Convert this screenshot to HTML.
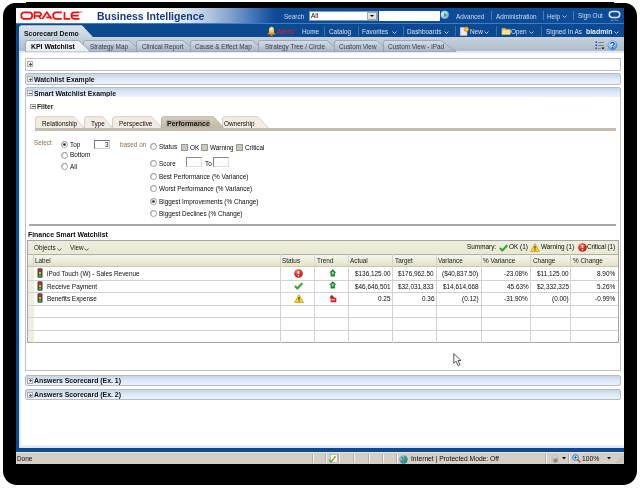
<!DOCTYPE html><html><head><meta charset="utf-8"><style>*{margin:0;padding:0;box-sizing:border-box}
html,body{width:640px;height:488px;overflow:hidden;background:#fff;font-family:"Liberation Sans",sans-serif;font-size:6.4px;color:#000;position:relative}
.a{position:absolute}
.t{position:absolute;line-height:1;white-space:nowrap;will-change:transform}
</style></head><body><div class="a" style="left:3px;top:3px;width:634px;height:482px;background:#000;border-radius:12px 12px 14px 14px / 13px 13px 14px 14px"></div>
<div class="a" style="left:26px;top:2px;width:588px;height:2px;background:#000"></div>
<div class="a" style="left:16px;top:8px;width:608px;height:456px;background:#fff"></div>
<div class="a" style="left:16px;top:8px;width:608px;height:15px;background:linear-gradient(to right,#fff 0px,#fff 144px,#e8eef5 159px,#c4d4e6 184px,#8eacd2 209px,#5a86c0 229px,#2e62aa 246px,#0e4b96 259px,#0e4b96 608px)"></div>
<div class="a" style="left:16px;top:23px;width:608px;height:1px;background:#3f7dcc"></div>
<div class="a" style="left:16px;top:24px;width:608px;height:13px;background:#0b4990"></div>
<div class="a" style="left:16px;top:37px;width:608px;height:15px;background:#0b4a93"></div>
<div class="a" style="left:19px;top:37px;width:605px;height:15px;background:linear-gradient(#c6d2dc,#b9c6d3 50%,#acb9ca)"></div>
<div class="a" style="left:16px;top:51px;width:608px;height:401px;background:#0b4a93"></div>
<div class="a" style="left:19px;top:51px;width:605px;height:395px;background:linear-gradient(to right,#d8e4f6,#eef3fb 2px,#fff 3px)"></div>
<div class="a" style="left:19px;top:51px;width:605px;height:4px;background:#e2eaf6"></div>
<div class="a" style="left:20px;top:53px;width:604px;height:393px;background:linear-gradient(to right,#e4ecf8,#fff 2px);border-radius:2px 0 0 0"></div>
<svg class="a" style="left:16px;top:8px" width="70" height="14" viewBox="0 0 70 14"><g fill="none" stroke="#ff0a0a" stroke-width="1.7" transform="translate(-16,-8)"><rect x="21.3" y="12.3" width="10.9" height="6.65" rx="3.2"/><path d="M34.5 19V12.3H38.6Q41 12.3 41 14.2Q41 16 38.6 16H34.5M38.3 16L41.2 19"/><path d="M42.2 19L46.9 12.3L51.6 19M46.4 17.3H50"/><path d="M61.8 12.3H56.4Q53.1 12.3 53.1 15.6Q53.1 18.95 56.4 18.95H61.8"/><path d="M64.5 12V18.95H70.2"/><path d="M79.5 12.3H74.6Q71.4 12.3 71.4 15.6Q71.4 18.95 74.6 18.95H79.5M72 15.6H78.6"/></g><circle cx="65" cy="4" r="0.7" fill="#f40c0c"/></svg>
<div class="t" style="left:96.6px;top:10.81px;font-size:10.5px;font-weight:bold;color:#173a7c;">Business Intelligence</div>
<div class="t" style="left:284px;top:14.00px;font-size:6.4px;color:#ccdcf0;">Search</div>
<div class="a" style="left:309px;top:11px;width:69px;height:10px;background:#fff;border:1px solid #7b9ebd"></div>
<div class="t" style="left:311px;top:13.00px;font-size:6.4px;color:#000;">All</div>
<div class="a" style="left:367px;top:12px;width:10px;height:8px;background:#e4e2dc;border:1px solid #a8a59c"></div>
<svg class="a" style="left:369px;top:14px" width="6" height="4" viewBox="0 0 6 4"><path d="M1 1h4L3 3z" fill="#000"/></svg>
<div class="a" style="left:378.5px;top:11px;width:61px;height:10px;background:#fff"></div>
<svg class="a" style="left:440px;top:10px" width="10" height="10" viewBox="0 0 10 10"><defs><radialGradient id="gb" cx="0.35" cy="0.4" r="0.75"><stop offset="0" stop-color="#e8f4ff"/><stop offset="0.6" stop-color="#8cc8f8"/><stop offset="1" stop-color="#4a98e0"/></radialGradient></defs><circle cx="4.8" cy="4.8" r="4.1" fill="url(#gb)"/><path d="M3.9 2.4L7.2 4.9L3.9 7.5z" fill="#3ea83a"/></svg>
<div class="t" style="left:456px;top:14.00px;font-size:6.4px;color:#ccdcf0;">Advanced</div>
<div class="a" style="left:491px;top:11px;width:1px;height:9px;background:#4a7cc0"></div>
<div class="t" style="left:496px;top:14.00px;font-size:6.4px;color:#ccdcf0;">Administration</div>
<div class="a" style="left:542.5px;top:11px;width:1px;height:9px;background:#4a7cc0"></div>
<div class="t" style="left:547.4px;top:14.00px;font-size:6.4px;color:#ccdcf0;">Help</div>
<svg class="a" style="left:562px;top:15px" width="5" height="3" viewBox="0 0 5 3"><path d="M0.5 0.5L2.5 2.5L4.5 0.5" stroke="#ccdcf0" fill="none" stroke-width="0.9"/></svg>
<div class="a" style="left:573.3px;top:11px;width:1px;height:9px;background:#4a7cc0"></div>
<div class="t" style="left:578px;top:13.00px;font-size:6.4px;color:#ccdcf0;">Sign Out</div>
<svg class="a" style="left:608px;top:10px" width="13" height="12" viewBox="0 0 13 12"><rect x="1.3" y="1.6" width="10.4" height="6" rx="3" fill="none" stroke="#dfe8f6" stroke-width="1.5"/><path d="M2.5 10.6Q6.5 9.2 10.5 10.6" stroke="#7fa3d3" stroke-width="0.7" fill="none"/></svg>
<svg class="a" style="left:16px;top:24px" width="80" height="14" viewBox="0 0 80 14"><defs><linearGradient id="sd" x1="0" y1="0" x2="0" y2="1"><stop offset="0" stop-color="#dae4ea"/><stop offset="1" stop-color="#c6d2dc"/></linearGradient></defs><path d="M3 14V4Q3 1.3 6 1.3H66L77 13V14z" fill="url(#sd)"/></svg>
<div class="t" style="left:24.4px;top:31.00px;font-size:6.9px;font-weight:bold;color:#111;">Scorecard Demo</div>
<svg class="a" style="left:266px;top:26px" width="11" height="11" viewBox="0 0 11 11"><defs><radialGradient id="bg" cx="0.5" cy="0.3" r="0.7"><stop offset="0" stop-color="#fff6b8"/><stop offset="0.5" stop-color="#f6c040"/><stop offset="1" stop-color="#e08a18"/></radialGradient></defs><path d="M5.5 0.8C3.6 0.8 3 2.4 3 4.3V6.6L1.2 8.6H9.8L8 6.6V4.3C8 2.4 7.4 0.8 5.5 0.8z" fill="url(#bg)"/><ellipse cx="5.5" cy="9.3" rx="1.3" ry="0.8" fill="#e09020"/></svg>
<div class="t" style="left:277px;top:29.00px;font-size:6.4px;color:#e8202e;font-style:italic">Alerts!</div>
<div class="t" style="left:301.6px;top:29.00px;font-size:6.4px;color:#d4e0f2;">Home</div>
<div class="a" style="left:324px;top:26px;width:1px;height:10px;background:#3d6fb0"></div>
<div class="t" style="left:329px;top:29.00px;font-size:6.4px;color:#d4e0f2;">Catalog</div>
<div class="a" style="left:357.5px;top:26px;width:1px;height:10px;background:#3d6fb0"></div>
<div class="t" style="left:362px;top:29.00px;font-size:6.4px;color:#d4e0f2;">Favorites</div>
<svg class="a" style="left:391.5px;top:31px" width="5" height="3" viewBox="0 0 5 3"><path d="M0.5 0.5L2.5 2.5L4.5 0.5" stroke="#d4e0f2" fill="none" stroke-width="0.9"/></svg>
<div class="a" style="left:403px;top:26px;width:1px;height:10px;background:#3d6fb0"></div>
<div class="t" style="left:407px;top:29.00px;font-size:6.4px;color:#d4e0f2;">Dashboards</div>
<svg class="a" style="left:443.5px;top:31px" width="5" height="3" viewBox="0 0 5 3"><path d="M0.5 0.5L2.5 2.5L4.5 0.5" stroke="#d4e0f2" fill="none" stroke-width="0.9"/></svg>
<div class="a" style="left:454.5px;top:26px;width:1px;height:10px;background:#3d6fb0"></div>
<svg class="a" style="left:459px;top:25px" width="11" height="12" viewBox="0 0 11 12"><path d="M1.3 2.5h5.5l1.2 1.2V10.6H1.3z" fill="#eeeaf6" stroke="#c8c0e0" stroke-width="0.5"/><circle cx="7.3" cy="4.3" r="2.3" fill="#f8c02a" stroke="#e0701a" stroke-width="0.6"/></svg>
<div class="t" style="left:470px;top:29.00px;font-size:6.4px;color:#d4e0f2;">New</div>
<svg class="a" style="left:484px;top:31px" width="5" height="3" viewBox="0 0 5 3"><path d="M0.5 0.5L2.5 2.5L4.5 0.5" stroke="#d4e0f2" fill="none" stroke-width="0.9"/></svg>
<div class="a" style="left:496px;top:26px;width:1px;height:10px;background:#3d6fb0"></div>
<svg class="a" style="left:500.5px;top:26px" width="10" height="9" viewBox="0 0 10 9"><path d="M0.8 2.2h3.3l1 1h4.3v5.3h-8.6z" fill="#e6c858" stroke="#b89830" stroke-width="0.4"/><path d="M1.6 4.4h8l-0.8 4.1h-7.9z" fill="#f8e698"/></svg>
<div class="t" style="left:511px;top:29.00px;font-size:6.4px;color:#d4e0f2;">Open</div>
<svg class="a" style="left:529px;top:31px" width="5" height="3" viewBox="0 0 5 3"><path d="M0.5 0.5L2.5 2.5L4.5 0.5" stroke="#d4e0f2" fill="none" stroke-width="0.9"/></svg>
<div class="a" style="left:540.5px;top:26px;width:1px;height:10px;background:#3d6fb0"></div>
<div class="t" style="left:545.5px;top:29.00px;font-size:6.4px;color:#d4e0f2;">Signed In As</div>
<div class="t" style="left:585.5px;top:29.00px;font-size:6.9px;font-weight:bold;color:#e4eef9;">biadmin</div>
<svg class="a" style="left:614px;top:31px" width="5" height="3" viewBox="0 0 5 3"><path d="M0.5 0.5L2.5 2.5L4.5 0.5" stroke="#d4e0f2" fill="none" stroke-width="0.9"/></svg>
<svg class="a" style="left:83px;top:40px" width="55" height="12" viewBox="0 0 55 12"><defs><linearGradient id="tga" x1="0" y1="0" x2="0" y2="1"><stop offset="0" stop-color="#f4f7fa"/><stop offset="1" stop-color="#e6edf5"/></linearGradient><linearGradient id="tgi" x1="0" y1="0" x2="0" y2="1"><stop offset="0" stop-color="#d6dee8"/><stop offset="1" stop-color="#a6b3c5"/></linearGradient></defs><path d="M0.5 12V2.8Q0.5 0.5 2.8 0.5H46L53.5 7V12z" fill="url(#tgi)" stroke="#8e9cae" stroke-width="0.8"/></svg>
<div class="t" style="left:90.3px;top:44.00px;font-size:6.4px;color:#333a44;">Strategy Map</div>
<svg class="a" style="left:136px;top:40px" width="56" height="12" viewBox="0 0 56 12"><defs><linearGradient id="tga" x1="0" y1="0" x2="0" y2="1"><stop offset="0" stop-color="#f4f7fa"/><stop offset="1" stop-color="#e6edf5"/></linearGradient><linearGradient id="tgi" x1="0" y1="0" x2="0" y2="1"><stop offset="0" stop-color="#d6dee8"/><stop offset="1" stop-color="#a6b3c5"/></linearGradient></defs><path d="M0.5 12V2.8Q0.5 0.5 2.8 0.5H47L54.5 7V12z" fill="url(#tgi)" stroke="#8e9cae" stroke-width="0.8"/></svg>
<div class="t" style="left:142px;top:44.00px;font-size:6.4px;color:#333a44;">Clinical Report</div>
<svg class="a" style="left:189.5px;top:40px" width="71.5" height="12" viewBox="0 0 71.5 12"><defs><linearGradient id="tga" x1="0" y1="0" x2="0" y2="1"><stop offset="0" stop-color="#f4f7fa"/><stop offset="1" stop-color="#e6edf5"/></linearGradient><linearGradient id="tgi" x1="0" y1="0" x2="0" y2="1"><stop offset="0" stop-color="#d6dee8"/><stop offset="1" stop-color="#a6b3c5"/></linearGradient></defs><path d="M0.5 12V2.8Q0.5 0.5 2.8 0.5H62.5L70.0 7V12z" fill="url(#tgi)" stroke="#8e9cae" stroke-width="0.8"/></svg>
<div class="t" style="left:195px;top:44.00px;font-size:6.4px;color:#333a44;">Cause &amp; Effect Map</div>
<svg class="a" style="left:258px;top:40px" width="78" height="12" viewBox="0 0 78 12"><defs><linearGradient id="tga" x1="0" y1="0" x2="0" y2="1"><stop offset="0" stop-color="#f4f7fa"/><stop offset="1" stop-color="#e6edf5"/></linearGradient><linearGradient id="tgi" x1="0" y1="0" x2="0" y2="1"><stop offset="0" stop-color="#d6dee8"/><stop offset="1" stop-color="#a6b3c5"/></linearGradient></defs><path d="M0.5 12V2.8Q0.5 0.5 2.8 0.5H69L76.5 7V12z" fill="url(#tgi)" stroke="#8e9cae" stroke-width="0.8"/></svg>
<div class="t" style="left:264.5px;top:44.00px;font-size:6.4px;color:#333a44;">Strategy Tree / Circle</div>
<svg class="a" style="left:333.5px;top:40px" width="51.5" height="12" viewBox="0 0 51.5 12"><defs><linearGradient id="tga" x1="0" y1="0" x2="0" y2="1"><stop offset="0" stop-color="#f4f7fa"/><stop offset="1" stop-color="#e6edf5"/></linearGradient><linearGradient id="tgi" x1="0" y1="0" x2="0" y2="1"><stop offset="0" stop-color="#d6dee8"/><stop offset="1" stop-color="#a6b3c5"/></linearGradient></defs><path d="M0.5 12V2.8Q0.5 0.5 2.8 0.5H42.5L50.0 7V12z" fill="url(#tgi)" stroke="#8e9cae" stroke-width="0.8"/></svg>
<div class="t" style="left:338.7px;top:44.00px;font-size:6.4px;color:#333a44;">Custom View</div>
<svg class="a" style="left:382.5px;top:40px" width="74.5" height="12" viewBox="0 0 74.5 12"><defs><linearGradient id="tga" x1="0" y1="0" x2="0" y2="1"><stop offset="0" stop-color="#f4f7fa"/><stop offset="1" stop-color="#e6edf5"/></linearGradient><linearGradient id="tgi" x1="0" y1="0" x2="0" y2="1"><stop offset="0" stop-color="#d6dee8"/><stop offset="1" stop-color="#a6b3c5"/></linearGradient></defs><path d="M0.5 12V2.8Q0.5 0.5 2.8 0.5H57.5L73.0 11.5V12z" fill="url(#tgi)" stroke="#8e9cae" stroke-width="0.8"/></svg>
<div class="t" style="left:388px;top:44.00px;font-size:6.4px;color:#333a44;">Custom View - iPad</div>
<svg class="a" style="left:25px;top:40px" width="65.5" height="12" viewBox="0 0 65.5 12"><defs><linearGradient id="tga" x1="0" y1="0" x2="0" y2="1"><stop offset="0" stop-color="#f4f7fa"/><stop offset="1" stop-color="#e6edf5"/></linearGradient><linearGradient id="tgi" x1="0" y1="0" x2="0" y2="1"><stop offset="0" stop-color="#d6dee8"/><stop offset="1" stop-color="#a6b3c5"/></linearGradient></defs><path d="M0.5 12V2.8Q0.5 0.5 2.8 0.5H53.5L64.0 10V12z" fill="url(#tga)" stroke="#8e9cae" stroke-width="0.8"/></svg>
<div class="t" style="left:30.8px;top:44.00px;font-size:6.9px;font-weight:bold;color:#000;">KPI Watchlist</div>
<svg class="a" style="left:595px;top:41px" width="10" height="9" viewBox="0 0 10 9"><g fill="#3a3f8a"><rect x="0.5" y="0.5" width="1.5" height="1.5"/><rect x="0.5" y="3.5" width="1.5" height="1.5"/><rect x="0.5" y="6.5" width="1.5" height="1.5"/></g><g fill="#777"><rect x="3" y="1" width="6" height="0.8"/><rect x="3" y="4" width="6" height="0.8"/><rect x="3" y="7" width="3" height="0.8"/></g><path d="M6.5 6.5h3l-1.5 2z" fill="#000"/></svg>
<svg class="a" style="left:606.5px;top:40px" width="11" height="11" viewBox="0 0 11 11"><defs><radialGradient id="hg" cx="0.4" cy="0.3" r="0.8"><stop offset="0" stop-color="#e6f4ff"/><stop offset="0.55" stop-color="#7ab8ee"/><stop offset="1" stop-color="#2f74c4"/></radialGradient></defs><circle cx="5.5" cy="5.3" r="4.6" fill="url(#hg)" stroke="#4a86cc" stroke-width="0.5"/><path d="M3.9 4Q3.9 2.3 5.6 2.3Q7.3 2.3 7.3 3.8Q7.3 4.8 6.2 5.3Q5.6 5.6 5.6 6.4" fill="none" stroke="#fff" stroke-width="2.1"/><path d="M3.9 4Q3.9 2.3 5.6 2.3Q7.3 2.3 7.3 3.8Q7.3 4.8 6.2 5.3Q5.6 5.6 5.6 6.4" fill="none" stroke="#1a3f9a" stroke-width="1.2"/><circle cx="5.6" cy="8" r="0.8" fill="#1a3f9a"/></svg>
<div class="a" style="left:25px;top:58px;width:596px;height:13px;border:1px solid #c0c0bc;background:#fff"></div>
<div class="a" style="left:27px;top:61px;width:6px;height:6px;background:#e8e8e2;border:1px solid #b4b4aa"></div>
<div class="a" style="left:28.5px;top:63.5px;width:3px;height:1px;background:#555"></div>
<div class="a" style="left:29.5px;top:62.5px;width:1px;height:3px;background:#555"></div>
<div class="a" style="left:25px;top:73px;width:596px;height:12px;background:linear-gradient(#c6d4e6,#dce7f5 45%,#eaf1fb);border:1px solid #b4bcc6;border-radius:2px"></div>
<div class="a" style="left:27px;top:76px;width:6px;height:6px;background:#ecece6;border:1px solid #aeaea4"></div>
<div class="a" style="left:28.5px;top:78.5px;width:3px;height:1px;background:#666"></div>
<div class="a" style="left:29.5px;top:77.5px;width:1px;height:3px;background:#666"></div>
<div class="t" style="left:34px;top:77.00px;font-size:6.9px;font-weight:bold;color:#111;">Watchlist Example</div>
<div class="a" style="left:25px;top:87px;width:596px;height:11px;background:linear-gradient(#c6d4e6,#dce7f5 45%,#eaf1fb);border:1px solid #b4bcc6;border-radius:2px"></div>
<div class="a" style="left:27px;top:90px;width:6px;height:6px;background:#ecece6;border:1px solid #aeaea4"></div>
<div class="a" style="left:28.5px;top:92.5px;width:3px;height:1px;background:#666"></div>
<div class="t" style="left:34px;top:91.00px;font-size:6.9px;font-weight:bold;color:#111;">Smart Watchlist Example</div>
<div class="a" style="left:25px;top:97px;width:596px;height:274px;border:1px solid #c0c0bc;border-top:none;background:#fff"></div>
<div class="a" style="left:30.3px;top:103.5px;width:5.5px;height:5.5px;background:#eeeeea;border:1px solid #a0a098"></div>
<div class="a" style="left:31.5px;top:105.7px;width:3px;height:1px;background:#555"></div>
<div class="t" style="left:37.3px;top:104.00px;font-size:6.7px;font-weight:bold;color:#1a1a1a;">Filter</div>
<svg class="a" style="left:35px;top:116px" width="50" height="13" viewBox="0 0 50 13"><path d="M0.5 13V3Q0.5 0.7 2.5 0.7H39L48.5 11V13z" fill="#f3ece4" stroke="#c9bfb0" stroke-width="0.7"/></svg>
<svg class="a" style="left:83.5px;top:116px" width="29.5" height="13" viewBox="0 0 29.5 13"><path d="M0.5 13V3Q0.5 0.7 2.5 0.7H18.5L28.0 11V13z" fill="#f3ece4" stroke="#c9bfb0" stroke-width="0.7"/></svg>
<svg class="a" style="left:111.5px;top:116px" width="50.5" height="13" viewBox="0 0 50.5 13"><path d="M0.5 13V3Q0.5 0.7 2.5 0.7H39.5L49.0 11V13z" fill="#f3ece4" stroke="#c9bfb0" stroke-width="0.7"/></svg>
<svg class="a" style="left:222px;top:116px" width="47" height="13" viewBox="0 0 47 13"><path d="M0.5 13V3Q0.5 0.7 2.5 0.7H36L45.5 11V13z" fill="#f3ece4" stroke="#c9bfb0" stroke-width="0.7"/></svg>
<svg class="a" style="left:160.5px;top:116px" width="63.5" height="13" viewBox="0 0 63.5 13"><defs><linearGradient id="fta" x1="0" y1="0" x2="0" y2="1"><stop offset="0" stop-color="#d8d0c0"/><stop offset="1" stop-color="#bfb59f"/></linearGradient></defs><path d="M0.5 13V3Q0.5 0.7 2.5 0.7H52.5L62.0 11V13z" fill="url(#fta)" stroke="#a89e8a" stroke-width="0.7"/></svg>
<div class="a" style="left:35px;top:128px;width:581px;height:2.5px;background:#c5bcad"></div>
<div class="t" style="left:41.6px;top:121.00px;font-size:6.4px;color:#0a0a0a;">Relationship</div>
<div class="t" style="left:91px;top:121.00px;font-size:6.4px;color:#0a0a0a;">Type</div>
<div class="t" style="left:119px;top:121.00px;font-size:6.4px;color:#0a0a0a;">Perspective</div>
<div class="a" style="left:166px;top:119.5px;width:44px;height:7.5px;background:#b6ae9c"></div>
<div class="t" style="left:167px;top:120.00px;font-size:7px;font-weight:bold;color:#111;">Performance</div>
<div class="t" style="left:223.7px;top:121.00px;font-size:6.4px;color:#0a0a0a;">Ownership</div>
<div class="t" style="left:34.4px;top:140.00px;font-size:6.4px;color:#8b6e48;">Select</div>
<svg class="a" style="left:60.5px;top:140.5px" width="7" height="7" viewBox="0 0 7 7"><circle cx="3.5" cy="3.5" r="3" fill="#fff" stroke="#7a7a7a" stroke-width="0.7"/><path d="M1.2 4.8A3 3 0 0 1 5.8 1.2" stroke="#9a9a9a" stroke-width="0.7" fill="none"/><circle cx="3.5" cy="3.5" r="1.3" fill="#222"/></svg>
<div class="t" style="left:69.5px;top:142.00px;font-size:6.4px;color:#0a0a0a;">Top</div>
<svg class="a" style="left:60.5px;top:151.5px" width="7" height="7" viewBox="0 0 7 7"><circle cx="3.5" cy="3.5" r="3" fill="#fff" stroke="#7a7a7a" stroke-width="0.7"/><path d="M1.2 4.8A3 3 0 0 1 5.8 1.2" stroke="#9a9a9a" stroke-width="0.7" fill="none"/></svg>
<div class="t" style="left:69.5px;top:152.00px;font-size:6.4px;color:#0a0a0a;">Bottom</div>
<svg class="a" style="left:60.5px;top:162.5px" width="7" height="7" viewBox="0 0 7 7"><circle cx="3.5" cy="3.5" r="3" fill="#fff" stroke="#7a7a7a" stroke-width="0.7"/><path d="M1.2 4.8A3 3 0 0 1 5.8 1.2" stroke="#9a9a9a" stroke-width="0.7" fill="none"/></svg>
<div class="t" style="left:69.5px;top:164.00px;font-size:6.4px;color:#0a0a0a;">All</div>
<div class="a" style="left:94px;top:140px;width:16px;height:9px;background:#fff;border:1px solid #777;border-right-color:#ccc;border-bottom-color:#ccc"></div>
<div class="t" style="right:531px;top:142.00px;font-size:6.4px;color:#0a0a0a;">3</div>
<div class="t" style="left:119.6px;top:142.00px;font-size:6.4px;color:#8b6e48;">based on</div>
<svg class="a" style="left:150px;top:143px" width="7" height="7" viewBox="0 0 7 7"><circle cx="3.5" cy="3.5" r="3" fill="#fff" stroke="#7a7a7a" stroke-width="0.7"/><path d="M1.2 4.8A3 3 0 0 1 5.8 1.2" stroke="#9a9a9a" stroke-width="0.7" fill="none"/></svg>
<div class="t" style="left:158.8px;top:144.00px;font-size:6.4px;color:#0a0a0a;">Status</div>
<div class="a" style="left:181px;top:143.5px;width:7px;height:7px;background:#c8c8c0;border:1px solid #9a9a92"></div>
<div class="t" style="left:190px;top:145.00px;font-size:6.4px;color:#0a0a0a;">OK</div>
<div class="a" style="left:200.5px;top:143.5px;width:7px;height:7px;background:#c8c8c0;border:1px solid #9a9a92"></div>
<div class="t" style="left:210px;top:145.00px;font-size:6.4px;color:#0a0a0a;">Warning</div>
<div class="a" style="left:235.5px;top:143.5px;width:7px;height:7px;background:#c8c8c0;border:1px solid #9a9a92"></div>
<div class="t" style="left:245px;top:145.00px;font-size:6.4px;color:#0a0a0a;">Critical</div>
<svg class="a" style="left:150px;top:160px" width="7" height="7" viewBox="0 0 7 7"><circle cx="3.5" cy="3.5" r="3" fill="#fff" stroke="#7a7a7a" stroke-width="0.7"/><path d="M1.2 4.8A3 3 0 0 1 5.8 1.2" stroke="#9a9a9a" stroke-width="0.7" fill="none"/></svg>
<div class="t" style="left:158.8px;top:161.00px;font-size:6.4px;color:#0a0a0a;">Score</div>
<div class="a" style="left:185.5px;top:157px;width:16px;height:9.5px;background:#fff;border:1px solid #888;border-right-color:#ddd;border-bottom-color:#ddd"></div>
<div class="t" style="left:204.5px;top:161.00px;font-size:6.4px;color:#0a0a0a;">To</div>
<div class="a" style="left:213px;top:157px;width:16px;height:9.5px;background:#fff;border:1px solid #888;border-right-color:#ddd;border-bottom-color:#ddd"></div>
<svg class="a" style="left:150px;top:173.0px" width="7" height="7" viewBox="0 0 7 7"><circle cx="3.5" cy="3.5" r="3" fill="#fff" stroke="#7a7a7a" stroke-width="0.7"/><path d="M1.2 4.8A3 3 0 0 1 5.8 1.2" stroke="#9a9a9a" stroke-width="0.7" fill="none"/></svg>
<div class="t" style="left:158.8px;top:174.00px;font-size:6.4px;color:#0a0a0a;">Best Performance (% Variance)</div>
<svg class="a" style="left:150px;top:185.4px" width="7" height="7" viewBox="0 0 7 7"><circle cx="3.5" cy="3.5" r="3" fill="#fff" stroke="#7a7a7a" stroke-width="0.7"/><path d="M1.2 4.8A3 3 0 0 1 5.8 1.2" stroke="#9a9a9a" stroke-width="0.7" fill="none"/></svg>
<div class="t" style="left:158.8px;top:186.00px;font-size:6.4px;color:#0a0a0a;">Worst Performance (% Variance)</div>
<svg class="a" style="left:150px;top:197.8px" width="7" height="7" viewBox="0 0 7 7"><circle cx="3.5" cy="3.5" r="3" fill="#fff" stroke="#7a7a7a" stroke-width="0.7"/><path d="M1.2 4.8A3 3 0 0 1 5.8 1.2" stroke="#9a9a9a" stroke-width="0.7" fill="none"/><circle cx="3.5" cy="3.5" r="1.3" fill="#222"/></svg>
<div class="t" style="left:158.8px;top:199.00px;font-size:6.4px;color:#0a0a0a;">Biggest Improvements (% Change)</div>
<svg class="a" style="left:150px;top:210.2px" width="7" height="7" viewBox="0 0 7 7"><circle cx="3.5" cy="3.5" r="3" fill="#fff" stroke="#7a7a7a" stroke-width="0.7"/><path d="M1.2 4.8A3 3 0 0 1 5.8 1.2" stroke="#9a9a9a" stroke-width="0.7" fill="none"/></svg>
<div class="t" style="left:158.8px;top:211.00px;font-size:6.4px;color:#0a0a0a;">Biggest Declines (% Change)</div>
<div class="a" style="left:29px;top:224px;width:587px;height:1.5px;background:#a8a8a8"></div>
<div class="t" style="left:27.5px;top:232.00px;font-size:6.9px;font-weight:bold;color:#0a0a0a;">Finance Smart Watchlist</div>
<div class="a" style="left:27px;top:240px;width:592px;height:103px;background:#fff;border:1px solid #a4a4a0"></div>
<div class="a" style="left:28px;top:241px;width:590px;height:13px;background:linear-gradient(#eeeedf,#e9e8d3)"></div>
<div class="t" style="left:34px;top:245.00px;font-size:6.4px;color:#1a1a1a;">Objects</div>
<svg class="a" style="left:56.5px;top:248px" width="5" height="3" viewBox="0 0 5 3"><path d="M0.5 0.5L2.5 2.5L4.5 0.5" stroke="#333" fill="none" stroke-width="0.8"/></svg>
<div class="t" style="left:69.7px;top:245.00px;font-size:6.4px;color:#1a1a1a;">View</div>
<svg class="a" style="left:84px;top:248px" width="5" height="3" viewBox="0 0 5 3"><path d="M0.5 0.5L2.5 2.5L4.5 0.5" stroke="#333" fill="none" stroke-width="0.8"/></svg>
<div class="t" style="right:144px;top:244.00px;font-size:6.4px;color:#0a0a0a;">Summary:</div>
<svg class="a" style="left:498.5px;top:243.5px" width="9" height="8" viewBox="0 0 9 8"><path d="M0.9 4L3.3 6.5L8.3 1.2" stroke="#34a82c" stroke-width="2.1" fill="none" stroke-linejoin="round"/></svg>
<div class="t" style="left:508.7px;top:244.00px;font-size:6.4px;color:#0a0a0a;">OK (1)</div>
<svg class="a" style="left:529.5px;top:243px" width="10" height="9" viewBox="0 0 10 9"><path d="M5 0.6L9.5 8.6H0.5z" fill="#fcd232" stroke="#c8900c" stroke-width="0.7" stroke-linejoin="round"/><path d="M5 3v2.8" stroke="#333" stroke-width="1.1"/><rect x="4.45" y="6.5" width="1.1" height="1.1" fill="#333"/></svg>
<div class="t" style="left:540.5px;top:244.00px;font-size:6.4px;color:#0a0a0a;">Warning (1)</div>
<svg class="a" style="left:577.5px;top:243px" width="9" height="9" viewBox="0 0 9 9"><defs><radialGradient id="cg" cx="0.4" cy="0.3" r="0.75"><stop offset="0" stop-color="#ff8a70"/><stop offset="0.5" stop-color="#e2301e"/><stop offset="1" stop-color="#a8140c"/></radialGradient></defs><circle cx="4.5" cy="4.5" r="4.3" fill="url(#cg)"/><path d="M4.5 1.9v3.1" stroke="#fff" stroke-width="1.4"/><rect x="3.8" y="6" width="1.4" height="1.4" fill="#fff"/></svg>
<div class="t" style="left:587.3px;top:244.00px;font-size:6.4px;color:#0a0a0a;letter-spacing:-0.1px">Critical (1)</div>
<div class="a" style="left:28px;top:254px;width:590px;height:13px;background:linear-gradient(#f5f4ea,#ecebd7 60%,#e2e0c6);border-top:1px solid #b0b0a8;border-bottom:1px solid #c9c7b2"></div>
<div class="a" style="left:33px;top:254px;width:1px;height:88.5px;background:#d2d2ce"></div>
<div class="a" style="left:280px;top:254px;width:1px;height:88.5px;background:#d2d2ce"></div>
<div class="a" style="left:314px;top:254px;width:1px;height:88.5px;background:#d2d2ce"></div>
<div class="a" style="left:348px;top:254px;width:1px;height:88.5px;background:#d2d2ce"></div>
<div class="a" style="left:392px;top:254px;width:1px;height:88.5px;background:#d2d2ce"></div>
<div class="a" style="left:436px;top:254px;width:1px;height:88.5px;background:#d2d2ce"></div>
<div class="a" style="left:481px;top:254px;width:1px;height:88.5px;background:#d2d2ce"></div>
<div class="a" style="left:530px;top:254px;width:1px;height:88.5px;background:#d2d2ce"></div>
<div class="a" style="left:570px;top:254px;width:1px;height:88.5px;background:#d2d2ce"></div>
<div class="a" style="left:28px;top:267px;width:5.5px;height:75px;background:#efeedf"></div>
<div class="t" style="left:35.2px;top:258.00px;font-size:6.4px;color:#1a1a1a;">Label</div>
<div class="t" style="left:281.9px;top:258.00px;font-size:6.4px;color:#1a1a1a;">Status</div>
<div class="t" style="left:316.59999999999997px;top:258.00px;font-size:6.4px;color:#1a1a1a;">Trend</div>
<div class="t" style="left:350.4px;top:258.00px;font-size:6.4px;color:#1a1a1a;">Actual</div>
<div class="t" style="left:394.7px;top:258.00px;font-size:6.4px;color:#1a1a1a;">Target</div>
<div class="t" style="left:438.45px;top:258.00px;font-size:6.4px;color:#1a1a1a;">Variance</div>
<div class="t" style="left:483.45px;top:258.00px;font-size:6.4px;color:#1a1a1a;">% Variance</div>
<div class="t" style="left:532.7px;top:258.00px;font-size:6.4px;color:#1a1a1a;">Change</div>
<div class="t" style="left:572.6px;top:258.00px;font-size:6.4px;color:#1a1a1a;">% Change</div>
<div class="a" style="left:28px;top:280px;width:590px;height:1px;background:#d0d0cc"></div>
<div class="a" style="left:28px;top:292px;width:590px;height:1px;background:#d0d0cc"></div>
<div class="a" style="left:28px;top:305px;width:590px;height:1px;background:#d0d0cc"></div>
<div class="a" style="left:28px;top:317px;width:590px;height:1px;background:#d0d0cc"></div>
<div class="a" style="left:28px;top:330px;width:590px;height:1px;background:#d0d0cc"></div>
<svg class="a" style="left:36.9px;top:268.2px" width="6" height="10" viewBox="0 0 6 10"><rect x="0.5" y="0.3" width="5" height="9.4" rx="1.2" fill="#444"/><circle cx="3" cy="2.2" r="1.2" fill="#e02020"/><circle cx="3" cy="5" r="1.2" fill="#f0c020"/><circle cx="3" cy="7.8" r="1.2" fill="#30c030"/></svg>
<div class="t" style="left:46.6px;top:271.00px;font-size:6.4px;color:#0a0a0a;">iPod Touch (W) - Sales Revenue</div>
<div class="t" style="right:249.7px;top:271.00px;font-size:6.4px;color:#0a0a0a;">$136,125.00</div>
<div class="t" style="right:206px;top:271.00px;font-size:6.4px;color:#0a0a0a;">$176,962.50</div>
<div class="t" style="right:161.3px;top:271.00px;font-size:6.4px;color:#0a0a0a;">($40,837.50)</div>
<div class="t" style="right:111.79999999999995px;top:271.00px;font-size:6.4px;color:#0a0a0a;">-23.08%</div>
<div class="t" style="right:71.29999999999995px;top:271.00px;font-size:6.4px;color:#0a0a0a;">$11,125.00</div>
<div class="t" style="right:25px;top:271.00px;font-size:6.4px;color:#0a0a0a;">8.90%</div>
<svg class="a" style="left:36.9px;top:280.7px" width="6" height="10" viewBox="0 0 6 10"><rect x="0.5" y="0.3" width="5" height="9.4" rx="1.2" fill="#444"/><circle cx="3" cy="2.2" r="1.2" fill="#e02020"/><circle cx="3" cy="5" r="1.2" fill="#f0c020"/><circle cx="3" cy="7.8" r="1.2" fill="#30c030"/></svg>
<div class="t" style="left:46.6px;top:284.00px;font-size:6.4px;color:#0a0a0a;">Receive Payment</div>
<div class="t" style="right:249.7px;top:284.00px;font-size:6.4px;color:#0a0a0a;">$46,646,501</div>
<div class="t" style="right:206px;top:284.00px;font-size:6.4px;color:#0a0a0a;">$32,031,833</div>
<div class="t" style="right:161.3px;top:284.00px;font-size:6.4px;color:#0a0a0a;">$14,614,668</div>
<div class="t" style="right:111.79999999999995px;top:284.00px;font-size:6.4px;color:#0a0a0a;">45.63%</div>
<div class="t" style="right:71.29999999999995px;top:284.00px;font-size:6.4px;color:#0a0a0a;">$2,332,325</div>
<div class="t" style="right:25px;top:284.00px;font-size:6.4px;color:#0a0a0a;">5.26%</div>
<svg class="a" style="left:36.9px;top:293.2px" width="6" height="10" viewBox="0 0 6 10"><rect x="0.5" y="0.3" width="5" height="9.4" rx="1.2" fill="#444"/><circle cx="3" cy="2.2" r="1.2" fill="#e02020"/><circle cx="3" cy="5" r="1.2" fill="#f0c020"/><circle cx="3" cy="7.8" r="1.2" fill="#30c030"/></svg>
<div class="t" style="left:46.6px;top:296.00px;font-size:6.4px;color:#0a0a0a;">Benefits Expense</div>
<div class="t" style="right:249.7px;top:296.00px;font-size:6.4px;color:#0a0a0a;">0.25</div>
<div class="t" style="right:206px;top:296.00px;font-size:6.4px;color:#0a0a0a;">0.36</div>
<div class="t" style="right:161.3px;top:296.00px;font-size:6.4px;color:#0a0a0a;">(0.12)</div>
<div class="t" style="right:111.79999999999995px;top:296.00px;font-size:6.4px;color:#0a0a0a;">-31.90%</div>
<div class="t" style="right:71.29999999999995px;top:296.00px;font-size:6.4px;color:#0a0a0a;">(0.00)</div>
<div class="t" style="right:25px;top:296.00px;font-size:6.4px;color:#0a0a0a;">-0.99%</div>
<svg class="a" style="left:294px;top:268.6px" width="9" height="9" viewBox="0 0 9 9"><defs><radialGradient id="cg" cx="0.4" cy="0.3" r="0.75"><stop offset="0" stop-color="#ff8a70"/><stop offset="0.5" stop-color="#e2301e"/><stop offset="1" stop-color="#a8140c"/></radialGradient></defs><circle cx="4.5" cy="4.5" r="4.3" fill="url(#cg)"/><path d="M4.5 1.9v3.1" stroke="#fff" stroke-width="1.4"/><rect x="3.8" y="6" width="1.4" height="1.4" fill="#fff"/></svg>
<svg class="a" style="left:294px;top:282px" width="9" height="8" viewBox="0 0 9 8"><path d="M0.9 4L3.3 6.5L8.3 1.2" stroke="#34a82c" stroke-width="2.1" fill="none" stroke-linejoin="round"/></svg>
<svg class="a" style="left:293.8px;top:294.3px" width="10" height="9" viewBox="0 0 10 9"><path d="M5 0.6L9.5 8.6H0.5z" fill="#fcd232" stroke="#c8900c" stroke-width="0.7" stroke-linejoin="round"/><path d="M5 3v2.8" stroke="#333" stroke-width="1.1"/><rect x="4.45" y="6.5" width="1.1" height="1.1" fill="#333"/></svg>
<svg class="a" style="left:328.8px;top:268.6px" width="8" height="8" viewBox="0 0 8 8"><path d="M3.75 0.3L7.3 3.8H5.9V7.5H1.6V3.8H0.2z" fill="#17862a"/><path d="M3.75 2.2L5.3 3.9H4.5V5.6H3V3.9H2.2z" fill="#9be09b"/></svg>
<svg class="a" style="left:328.8px;top:281.2px" width="8" height="8" viewBox="0 0 8 8"><path d="M3.75 0.3L7.3 3.8H5.9V7.5H1.6V3.8H0.2z" fill="#17862a"/><path d="M3.75 2.2L5.3 3.9H4.5V5.6H3V3.9H2.2z" fill="#9be09b"/></svg>
<svg class="a" style="left:328.8px;top:294.8px" width="8" height="8" viewBox="0 0 8 8"><path d="M2.2 0.3L0.2 2.8L1.6 2.8V7.3H7.3V2.8H5.5L3.4 0.3z" fill="#c81e28"/><rect x="2.3" y="3.9" width="3.6" height="1.6" fill="#ffb0b0"/></svg>
<div class="a" style="left:25px;top:374.5px;width:596px;height:11.0px;background:linear-gradient(#c6d4e6,#dce7f5 45%,#eaf1fb);border:1px solid #b4bcc6;border-radius:2px"></div>
<div class="a" style="left:27px;top:377.5px;width:6px;height:6px;background:#ecece6;border:1px solid #aeaea4"></div>
<div class="a" style="left:28.5px;top:380.0px;width:3px;height:1px;background:#666"></div>
<div class="a" style="left:29.5px;top:379.0px;width:1px;height:3px;background:#666"></div>
<div class="t" style="left:34px;top:378.00px;font-size:6.9px;font-weight:bold;color:#111;">Answers Scorecard (Ex. 1)</div>
<div class="a" style="left:25px;top:389px;width:596px;height:11px;background:linear-gradient(#c6d4e6,#dce7f5 45%,#eaf1fb);border:1px solid #b4bcc6;border-radius:2px"></div>
<div class="a" style="left:27px;top:392px;width:6px;height:6px;background:#ecece6;border:1px solid #aeaea4"></div>
<div class="a" style="left:28.5px;top:394.5px;width:3px;height:1px;background:#666"></div>
<div class="a" style="left:29.5px;top:393.5px;width:1px;height:3px;background:#666"></div>
<div class="t" style="left:34px;top:392.00px;font-size:6.9px;font-weight:bold;color:#111;">Answers Scorecard (Ex. 2)</div>
<svg class="a" style="left:452.5px;top:352.5px" width="10" height="14" viewBox="0 0 10 14"><path d="M0.8 0.6V10.3L3 8.2L5 12.5L6.9 11.8L5 7.5H8z" fill="#fff" stroke="#555" stroke-width="1"/></svg>
<div class="a" style="left:19px;top:445px;width:605px;height:3px;background:linear-gradient(#eef3fa,#d9e4f4)"></div>
<div class="a" style="left:16px;top:448px;width:608px;height:4px;background:#0b4a93"></div>
<div class="a" style="left:16px;top:452px;width:608px;height:12px;background:#d4d0c8;border-top:1px solid #e6e4de"></div>
<div class="t" style="left:17px;top:456.00px;font-size:6.4px;color:#0a0a0a;">Done</div>
<div class="a" style="left:312px;top:454px;width:1px;height:9px;background:#b4b0a8"></div>
<div class="a" style="left:313px;top:454px;width:1px;height:9px;background:#f4f2ee"></div>
<div class="a" style="left:325px;top:454px;width:1px;height:9px;background:#b4b0a8"></div>
<div class="a" style="left:326px;top:454px;width:1px;height:9px;background:#f4f2ee"></div>
<div class="a" style="left:338px;top:454px;width:1px;height:9px;background:#b4b0a8"></div>
<div class="a" style="left:339px;top:454px;width:1px;height:9px;background:#f4f2ee"></div>
<div class="a" style="left:353px;top:454px;width:1px;height:9px;background:#b4b0a8"></div>
<div class="a" style="left:354px;top:454px;width:1px;height:9px;background:#f4f2ee"></div>
<div class="a" style="left:368px;top:454px;width:1px;height:9px;background:#b4b0a8"></div>
<div class="a" style="left:369px;top:454px;width:1px;height:9px;background:#f4f2ee"></div>
<div class="a" style="left:382px;top:454px;width:1px;height:9px;background:#b4b0a8"></div>
<div class="a" style="left:383px;top:454px;width:1px;height:9px;background:#f4f2ee"></div>
<div class="a" style="left:396px;top:454px;width:1px;height:9px;background:#b4b0a8"></div>
<div class="a" style="left:397px;top:454px;width:1px;height:9px;background:#f4f2ee"></div>
<div class="a" style="left:545px;top:454px;width:1px;height:9px;background:#b4b0a8"></div>
<div class="a" style="left:546px;top:454px;width:1px;height:9px;background:#f4f2ee"></div>
<div class="a" style="left:568px;top:454px;width:1px;height:9px;background:#b4b0a8"></div>
<div class="a" style="left:569px;top:454px;width:1px;height:9px;background:#f4f2ee"></div>
<svg class="a" style="left:327.5px;top:454px" width="11" height="10" viewBox="0 0 11 10"><rect x="2.5" y="0.5" width="7" height="8" fill="#f4f4f0" stroke="#9a9a9a" stroke-width="0.5"/><rect x="6" y="2" width="2" height="2" fill="#f0a040"/><path d="M1 5.5L3 8L6.5 3.5" stroke="#3aa02a" stroke-width="1.2" fill="none"/></svg>
<svg class="a" style="left:398.5px;top:454.5px" width="10" height="9" viewBox="0 0 10 9"><defs><radialGradient id="gl" cx="0.35" cy="0.3" r="0.8"><stop offset="0" stop-color="#9fd8ff"/><stop offset="1" stop-color="#1e5fb8"/></radialGradient></defs><circle cx="4.5" cy="4.5" r="4.2" fill="url(#gl)"/><path d="M2 2.5Q4 2 4 4T2.5 7M5.5 1.5Q7.5 3 6 5T7.5 7.5" stroke="#2e9a3a" stroke-width="1.4" fill="none"/></svg>
<div class="t" style="left:410.7px;top:456.00px;font-size:6.7px;color:#0a0a0a;">Internet | Protected Mode: Off</div>
<svg class="a" style="left:549.5px;top:454px" width="10" height="9" viewBox="0 0 10 9"><path d="M2 8V4Q2 1 5 1T8 4V8" fill="none" stroke="#c0c0c0" stroke-width="1.2"/><rect x="3.5" y="4.5" width="4" height="4" fill="#8a8a8a"/></svg>
<svg class="a" style="left:562px;top:457px" width="4" height="3" viewBox="0 0 4 3"><path d="M0 0h4L2 2.5z" fill="#111"/></svg>
<svg class="a" style="left:572px;top:454px" width="9" height="9" viewBox="0 0 9 9"><circle cx="3.5" cy="3.5" r="2.8" fill="#cfe6ff" stroke="#2060c0" stroke-width="0.8"/><path d="M3.5 1.8v3.4M1.8 3.5h3.4" stroke="#2060c0" stroke-width="0.8"/><path d="M5.5 5.5L8.3 8.3" stroke="#a05030" stroke-width="1.4"/></svg>
<div class="t" style="left:581.5px;top:456.00px;font-size:6.7px;color:#0a0a0a;">100%</div>
<svg class="a" style="left:606.5px;top:457px" width="4" height="3" viewBox="0 0 4 3"><path d="M0 0h4L2 2.5z" fill="#111"/></svg>
<svg class="a" style="left:616px;top:455px" width="8" height="9" viewBox="0 0 8 9"><path d="M7.5 1L0.5 8M7.5 4L3.5 8M7.5 7L6.5 8" stroke="#a8a49c" stroke-width="0.8"/></svg></body></html>
